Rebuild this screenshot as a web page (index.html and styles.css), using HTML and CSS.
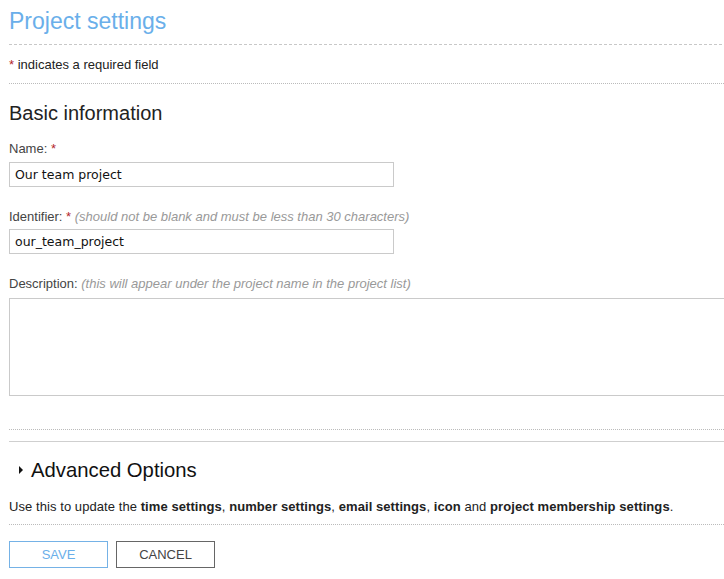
FILE: index.html
```html
<!DOCTYPE html>
<html>
<head>
<meta charset="utf-8">
<link rel="stylesheet" href="styles.css">
</head>
<body>
<div class="page">
  <h1 class="title">Project settings</h1>
  <p class="required-note"><span class="req">*</span> indicates a required field</p>
  <h2 class="section-title">Basic information</h2>
  <div class="field field-first">
    <label class="label">Name: <span class="req">*</span></label>
    <input class="text-input" type="text" value="Our team project">
  </div>
  <div class="field">
    <label class="label">Identifier: <span class="req">*</span> <em class="hint">(should not be blank and must be less than 30 characters)</em></label>
    <input class="text-input" type="text" value="our_team_project">
  </div>
  <div class="field">
    <label class="label label-desc">Description: <em class="hint">(this will appear under the project name in the project list)</em></label>
    <textarea class="textarea"></textarea>
  </div>
  <div class="divider-dotted spacer-top"></div>
  <div class="divider-solid"></div>
  <h3 class="advanced"><span class="triangle"></span>Advanced Options</h3>
  <p class="advanced-desc">Use this to update the <b>time settings</b>, <b>number settings</b>, <b>email settings</b>, <b>icon</b> and <b>project membership settings</b>.</p>
  <div class="actions">
    <button class="btn btn-save">SAVE</button>
    <button class="btn btn-cancel">CANCEL</button>
  </div>
</div>
</body>
</html>
```
FILE: styles.css
```css
html, body {
  margin: 0;
  padding: 0;
  overflow: hidden;
  background: #fff;
}
body {
  font-family: "Liberation Sans", Arial, sans-serif;
  color: #222;
}
.page {
  padding: 0 0 0 9px;
  width: 800px;
}
.title {
  margin: 0;
  padding-top: 7px;
  height: 37px;
  font-size: 23px;
  font-weight: normal;
  color: #6aafea;
  line-height: 28px;
  border-bottom: 1px dashed #c8c8c8;
  width: 713px;
}
.required-note {
  margin: 0;
  font-size: 13px;
  line-height: 15px;
  padding: 12px 0 11px;
  color: #222;
  border-bottom: 1px dotted #bbb;
  width: 715px;
}
.req {
  color: #b3262a;
}
.section-title {
  margin: 0;
  padding: 18px 0 0;
  font-size: 20px;
  font-weight: normal;
  line-height: 22px;
  color: #222;
}
.field {
  display: flex;
  flex-direction: column;
  align-items: flex-start;
}
.field-first {
  margin-top: 17px;
}
.field-first .label {
  margin-bottom: 6px;
}
.label {
  font-size: 13px;
  line-height: 15px;
  color: #444;
  margin: 0 0 5px;
}
.label-desc {
  margin-bottom: 7px;
}
.hint {
  color: #999;
}
.text-input {
  box-sizing: border-box;
  width: 385px;
  height: 25px;
  border: 1px solid #cacaca;
  padding: 0 5px;
  margin: 0 0 22px;
  font-family: "DejaVu Sans", sans-serif;
  font-size: 12.5px;
  color: #111;
  outline: none;
}
.textarea {
  box-sizing: border-box;
  width: 760px;
  height: 98px;
  border: 1px solid #cacaca;
  margin: 0;
  resize: none;
  outline: none;
}
.divider-dotted {
  border-bottom: 1px dotted #bbb;
  width: 715px;
}
.spacer-top {
  margin-top: 33px;
}
.divider-solid {
  border-bottom: 1px solid #cfcfcf;
  width: 715px;
  margin-top: 11px;
}
.advanced {
  margin: 0;
  padding: 17px 0 0 10px;
  display: flex;
  align-items: center;
  font-size: 20.3px;
  font-weight: normal;
  line-height: 22px;
  color: #111;
}
.triangle {
  display: inline-block;
  width: 0;
  height: 0;
  border-top: 4px solid transparent;
  border-bottom: 4px solid transparent;
  border-left: 4px solid #111;
  margin-right: 8px;
}
.advanced-desc {
  margin: 0;
  padding: 18px 0 10px;
  font-size: 13px;
  line-height: 15px;
  letter-spacing: 0.07px;
  color: #222;
  border-bottom: 1px dotted #bbb;
  width: 715px;
}
.advanced-desc b {
  color: #222;
}
.actions {
  display: flex;
  gap: 8px;
  padding-top: 16px;
}
.btn {
  box-sizing: border-box;
  width: 99px;
  height: 27px;
  background: #fff;
  font-family: "Liberation Sans", Arial, sans-serif;
  font-size: 13px;
  padding: 0;
  cursor: pointer;
}
.btn-save {
  border: 1px solid #75b2e6;
  color: #6aafea;
}
.btn-cancel {
  border: 1px solid #666;
  color: #444;
}
```
